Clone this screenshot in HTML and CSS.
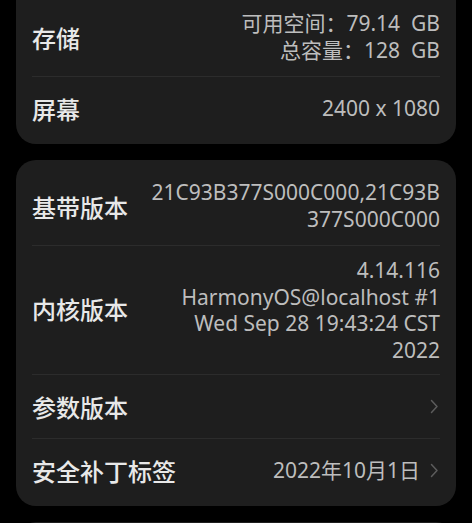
FILE: index.html
```html
<!DOCTYPE html>
<html lang="zh-CN">
    <head>
        <meta charset="UTF-8">
        <meta name="viewport" content="width=device-width, initial-scale=1.0">
        <title>关于手机</title>
        <link rel="stylesheet" href="styles.css">
    </head>
    <body>
        <div class="grupo grupo-primero">
            <div class="fila">
                <div class="etiqueta">存储</div>
                <div class="valor">可用空间：79.14&nbsp; GB<br>总容量：128&nbsp; GB</div>
            </div>
            <div class="fila">
                <div class="etiqueta">屏幕</div>
                <div class="valor">2400 x 1080</div>
            </div>
        </div>

        <div class="grupo grupo-segundo">
            <div class="fila">
                <div class="etiqueta">基带版本</div>
                <div class="valor">21C93B377S000C000,21C93B<br>377S000C000</div>
            </div>
            <div class="fila">
                <div class="etiqueta">内核版本</div>
                <div class="valor">4.14.116<br>HarmonyOS@localhost #1<br>Wed Sep 28 19:43:24 CST<br>2022</div>
            </div>
            <div class="fila">
                <div class="etiqueta">参数版本</div>
                <div class="valor">
                    <svg class="flecha" width="9" height="15" viewBox="0 0 9 15"><path d="M1.5 1.5 L7 7.5 L1.5 13.5" fill="none" stroke="#5c5c5c" stroke-width="1.5" stroke-linecap="round" stroke-linejoin="round"/></svg>
                </div>
            </div>
            <div class="fila">
                <div class="etiqueta">安全补丁标签</div>
                <div class="valor">2022年10月1日
                    <svg class="flecha" width="9" height="15" viewBox="0 0 9 15"><path d="M1.5 1.5 L7 7.5 L1.5 13.5" fill="none" stroke="#5c5c5c" stroke-width="1.5" stroke-linecap="round" stroke-linejoin="round"/></svg>
                </div>
            </div>
        </div>

        <div class="grupo"></div>
    </body>
</html>
```

FILE: styles.css
```css
* {
    box-sizing: border-box;
    font-family: "Noto Sans", "Noto Sans CJK SC", sans-serif;
}

body {
    margin: 0;
    background: #000;
    color: #e6e6e6;
    display: flex;
    flex-direction: column;
    gap: 16px;
    padding: 0 16px;
}

.grupo {
    background: #1e1e1e;
    border-radius: 20px;
    padding: 4px 16px;
    min-height: 40px;
}

.grupo-primero {
    margin-top: -6px; /* la tarjeta sigue por encima de la pantalla */
    border-top-left-radius: 0;
    border-top-right-radius: 0;
}

.grupo-segundo {
    padding-top: 7px;
}

.fila {
    display: flex;
    justify-content: space-between;
    align-items: center;
    gap: 20px;
    min-height: 64px;
    padding: 12px 0;
}

.fila + .fila {
    border-top: 1px solid #2c2c2c;
}

.etiqueta {
    font-size: 24px;
    font-weight: 500;
    white-space: nowrap;
    color: #e8e8e8;
}

.valor {
    font-size: 21px;
    line-height: 27px;
    color: #bdbdbd;
    text-align: right;
    display: flex;
    align-items: center;
    justify-content: flex-end;
    gap: 10px;
}

.fila:first-child .valor,
.fila:nth-child(2) .valor {
    display: block;
}

.grupo-segundo .fila:nth-child(2) {
    padding: 11px 0;
    line-height: 26.5px;
}

.grupo-segundo .fila:nth-child(2) .valor {
    line-height: 26.5px;
}

.flecha {
    flex-shrink: 0;
    margin-right: 1px;
}
```
